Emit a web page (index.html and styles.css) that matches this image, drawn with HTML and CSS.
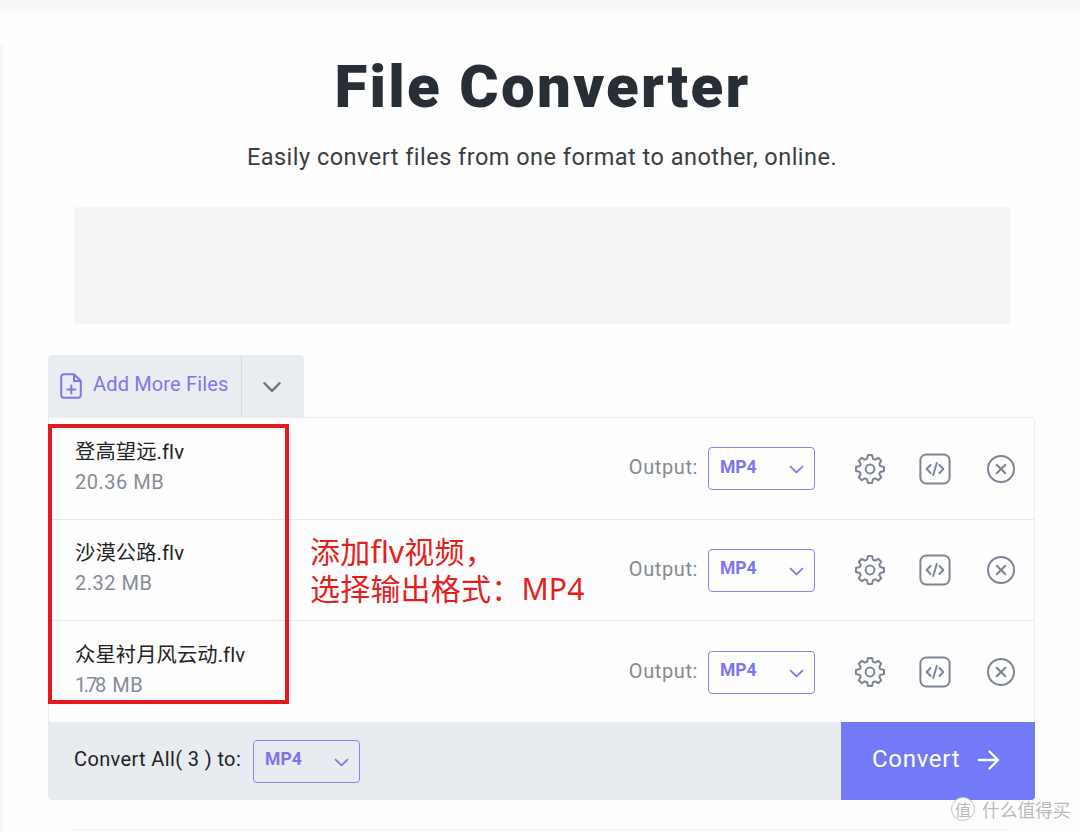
FILE: index.html
```html
<!DOCTYPE html>
<html lang="en">
<head>
    <meta charset="UTF-8">
    <meta name="viewport" content="width=device-width, initial-scale=1.0">
    <title>File Converter</title>
    <link rel="stylesheet" href="styles.css">
</head>
<body>
<svg class="sprite">
    <symbol id="gear" viewBox="-16 -16 32 32">
        <path d="M-2-14H2L3-10.2 5.1-9.3 8.3-11.2 11.2-8.3 9.3-5.1 10.2-3 14-2V2L10.2 3 9.3 5.1 11.2 8.3 8.3 11.2 5.1 9.3 3 10.2 2 14H-2L-3 10.2-5.1 9.3-8.3 11.2-11.2 8.3-9.3 5.1-10.2 3-14 2V-2L-10.2-3-9.3-5.1-11.2-8.3-8.3-11.2-5.1-9.3-3-10.2Z"/>
        <circle r="4.4"/>
    </symbol>
    <symbol id="code" viewBox="-16 -16 32 32">
        <rect x="-14.6" y="-14.6" width="29.2" height="29.2" rx="6"/>
        <path d="M-4.5-4L-8.3 0-4.5 4M4.5-4L8.3 0 4.5 4M1.8-6L-1.8 6"/>
    </symbol>
    <symbol id="remove" viewBox="-16 -16 32 32">
        <circle r="13"/>
        <path d="M-4.3-4.3L4.3 4.3M4.3-4.3L-4.3 4.3"/>
    </symbol>
    <symbol id="chevron" viewBox="0 0 20 20">
        <path d="M3 6.5L10 13.5 17 6.5"/>
    </symbol>
</svg>

<div class="page">
    <h1>File Converter</h1>
    <p class="subtitle">Easily convert files from one format to another, online.</p>
    <div class="ad"></div>

    <div class="converter">
        <div class="tabs">
            <button class="add-btn">
                <svg class="file-icon" viewBox="0 0 22 26"><path d="M14 1.2H4A2.8 2.8 0 0 0 1.2 4V22A2.8 2.8 0 0 0 4 24.8H18A2.8 2.8 0 0 0 20.8 22V8ZM14 1.2V8H20.8M11.3 12.5V20.5M7.3 16.5H15.3"/></svg>
                <span class="add-label">Add More Files</span>
            </button>
            <button class="more-btn"><svg><use href="#chevron"/></svg></button>
        </div>

        <div class="panel">
            <div class="row">
                <div class="file">
                    <div class="name">登高望远.flv</div>
                    <div class="size">20.36 MB</div>
                </div>
                <span class="output">Output:</span>
                <div class="select"><span>MP4</span><svg><use href="#chevron"/></svg></div>
                <div class="actions">
                    <svg><use href="#gear"/></svg>
                    <svg><use href="#code"/></svg>
                    <svg><use href="#remove"/></svg>
                </div>
            </div>
            <div class="row">
                <div class="file">
                    <div class="name">沙漠公路.flv</div>
                    <div class="size">2.32 MB</div>
                </div>
                <span class="output">Output:</span>
                <div class="select"><span>MP4</span><svg><use href="#chevron"/></svg></div>
                <div class="actions">
                    <svg><use href="#gear"/></svg>
                    <svg><use href="#code"/></svg>
                    <svg><use href="#remove"/></svg>
                </div>
            </div>
            <div class="row last">
                <div class="file">
                    <div class="name">众星衬月风云动.flv</div>
                    <div class="size"><span class="tight">1.7</span>8 MB</div>
                </div>
                <span class="output">Output:</span>
                <div class="select"><span>MP4</span><svg><use href="#chevron"/></svg></div>
                <div class="actions">
                    <svg><use href="#gear"/></svg>
                    <svg><use href="#code"/></svg>
                    <svg><use href="#remove"/></svg>
                </div>
            </div>
        </div>

        <div class="footer">
            <span class="all">Convert All( 3 ) to:</span>
            <div class="select"><span>MP4</span><svg><use href="#chevron"/></svg></div>
            <button class="convert-btn">
                <span>Convert</span>
                <svg viewBox="0 0 24 24"><path d="M3 12H22M13.5 3.5L22 12 13.5 20.5"/></svg>
            </button>
        </div>
    </div>
    <div class="next-section"></div>

    <div class="highlight"></div>
    <div class="note">添加flv视频，<br>选择输出格式：MP4</div>
    <div class="watermark"><span class="badge">值</span><span class="brand">什么值得买</span></div>
</div>
</body>
</html>
```
FILE: styles.css
```css
* {
    box-sizing: border-box;
}
body {
    margin: 0;
    background: #fefefe;
    font-family: Roboto, "Noto Sans CJK SC", sans-serif;
    color: #222;
}
svg {
    fill: none;
    stroke: currentColor;
    stroke-width: 2;
    stroke-linecap: round;
    stroke-linejoin: round;
    flex: none;
}
button {
    border: 0;
    padding: 0;
    font-family: inherit;
    cursor: pointer;
}
.sprite {
    display: none;
}
.page {
    position: relative;
    width: 1080px;
    height: 832px;
    overflow: hidden;
    padding: 55px 45px 0 48px;
    background: linear-gradient(#f6f6f6 0, #f8f8f8 7px, #fefefe 20px);
}
.page::before {
    content: "";
    position: absolute;
    left: 0;
    top: 44px;
    width: 3px;
    height: 788px;
    background: #f6f6f6;
}

h1 {
    margin: 0;
    height: 62px;
    line-height: 64px;
    text-align: center;
    font-size: 60px;
    font-weight: 900;
    letter-spacing: 2.3px;
    text-indent: 2px;
    color: #282e35;
    white-space: nowrap;
}
.subtitle {
    margin: 26px 0 0;
    height: 28px;
    line-height: 29px;
    text-align: center;
    font-size: 23.5px;
    letter-spacing: 0.48px;
    text-indent: 1px;
    color: #3a3d40;
    white-space: nowrap;
}
.ad {
    margin: 36px 25px 0 26px;
    height: 117px;
    background: #f5f5f5;
    border-radius: 3px;
}

.converter {
    margin-top: 31px;
    width: 987px;
}
.tabs {
    display: flex;
    width: 256px;
    height: 62px;
    background: #e9ecf0;
    border-radius: 4px 4px 0 0;
}
.add-btn {
    display: flex;
    align-items: center;
    width: 194px;
    padding-left: 12px;
    background: none;
    border-right: 1px solid #d7dbe1;
    color: #7d77ee;
}
.file-icon {
    width: 22px;
    height: 26px;
}
.add-label {
    margin: -4px 0 0 11px;
    font-size: 20px;
    letter-spacing: 0.15px;
    white-space: nowrap;
}
.more-btn {
    display: flex;
    flex: 1;
    align-items: center;
    justify-content: center;
    padding-right: 2px;
    background: none;
    color: #70767f;
}
.more-btn svg {
    width: 22px;
    height: 22px;
    margin-top: 2px;
}
.panel {
    border: 1px solid #ececee;
    border-width: 1px 1px 0;
    border-top-right-radius: 4px;
}
.row {
    display: flex;
    align-items: center;
    height: 101px;
    padding: 0 17px 0 26px;
    border-bottom: 1px solid #e9eaec;
}
.row:first-child {
    height: 102px;
}
.row.last {
    padding-top: 1px;
    border-bottom: 0;
}
.file {
    flex: 1;
    margin-top: -4px;
}
.name {
    height: 30px;
    line-height: 30px;
    font-size: 20.3px;
    letter-spacing: 0.1px;
}
.size {
    height: 30px;
    line-height: 30px;
    font-size: 20px;
    letter-spacing: 0.5px;
    color: #858c96;
}
.tight {
    letter-spacing: -2.6px;
}
.output {
    margin: -3px 10px 0 0;
    font-size: 20px;
    letter-spacing: 0.6px;
    color: #858a90;
}
.select {
    display: flex;
    align-items: center;
    justify-content: space-between;
    width: 107px;
    height: 43px;
    padding: 0 9px 0 11px;
    border: 1.5px solid #8983ec;
    border-radius: 4px;
    color: #7b75ee;
    font-size: 17.5px;
    font-weight: bold;
}
.select span {
    margin-top: -4px;
}
.select svg {
    width: 17px;
    height: 17px;
    margin-top: 2px;
}
.actions {
    display: flex;
    gap: 33px;
    margin-left: 39px;
    color: #7d8493;
}
.actions svg {
    width: 32px;
    height: 32px;
}
.actions svg:last-child {
    margin-left: 1px;
}

.footer {
    display: flex;
    align-items: center;
    height: 78px;
    padding-left: 26px;
    background: #e8ebef;
    border-radius: 0 0 4px 4px;
}
.all {
    margin: -4px 12px 0 0;
    font-size: 20px;
    letter-spacing: 0.37px;
    color: #222;
    white-space: nowrap;
}
.convert-btn {
    display: flex;
    align-items: center;
    width: 194px;
    height: 78px;
    margin-left: auto;
    padding-left: 31px;
    gap: 16px;
    background: #727af7;
    color: #fff;
    font-size: 24px;
    letter-spacing: 0.7px;
    border-bottom-right-radius: 4px;
}
.convert-btn svg {
    width: 24px;
    height: 24px;
    margin-top: -3px;
    stroke-width: 2.3;
}
.convert-btn span {
    margin-top: -4px;
}
.next-section {
    height: 2px;
    margin: 29px 27px 0 25px;
    background: #f5f5f5;
}

/* annotations over the page */
.highlight {
    position: absolute;
    left: 48px;
    top: 424px;
    width: 241px;
    height: 280px;
    border: 4px solid #e7191c;
}
.note {
    position: absolute;
    left: 310px;
    top: 533px;
    font-family: "Noto Sans", "Noto Sans CJK SC", sans-serif;
    font-size: 30px;
    line-height: 37px;
    letter-spacing: 0.2px;
    color: #e5201c;
    white-space: nowrap;
}
.watermark {
    position: absolute;
    left: 951px;
    top: 796px;
    display: flex;
    align-items: center;
    gap: 7px;
    font-family: "Noto Sans CJK SC", sans-serif;
    color: #b9b9bd;
}
.badge {
    width: 24px;
    height: 24px;
    line-height: 23px;
    text-align: center;
    border: 1px solid #c4c4c8;
    border-radius: 50%;
    background: #fff;
    font-size: 16px;
}
.brand {
    font-size: 17.7px;
    line-height: 26px;
}
```
